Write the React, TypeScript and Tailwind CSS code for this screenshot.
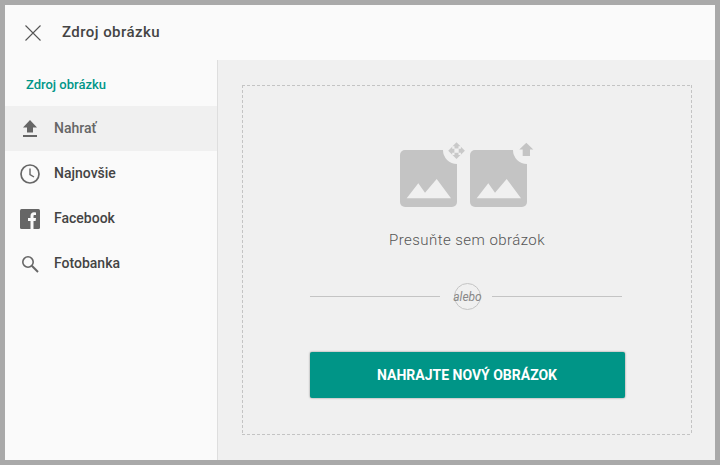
import React from 'react';

function ImageTile({ badge }: { badge: 'move' | 'up' }) {
  return (
    <svg width="57" height="65" viewBox="0 0 57 65" className="block overflow-visible">
      <rect x="0" y="8" width="57" height="57" rx="5" fill="#c4c4c4" />
      <circle cx="57" cy="8" r="14" fill="#f0f0f0" />
      <rect x="43" y="-6" width="28" height="14" fill="#f0f0f0" />
      <path d="M6.700 56.300 L18.300 41.300 L25 50.700 L36.700 37 L51 56.300 Z" fill="#f0f0f0" />
      {badge === 'up' ? (
        <path d="M56.300 0.700 L63.300 7.500 L60 7.500 L60 14 L52.700 14 L52.700 7.500 L49.300 7.500 Z" fill="#c4c4c4" />
      ) : (
        <g fill="#c9c9c9">
          <path d="M56.500 0.300 L60.500 4.300 L58.500 4.300 L58.500 6.500 L54.500 6.500 L54.500 4.300 L52.500 4.300 Z" />
          <path d="M56.500 17 L60.500 13 L58.500 13 L58.500 10.800 L54.500 10.800 L54.500 13 L52.500 13 Z" />
          <path d="M48.200 8.700 L52.200 4.700 L52.200 6.700 L54.400 6.700 L54.400 10.700 L52.200 10.700 L52.200 12.700 Z" />
          <path d="M64.900 8.700 L60.900 4.700 L60.900 6.700 L58.700 6.700 L58.700 10.700 L60.900 10.700 L60.900 12.700 Z" />
        </g>
      )}
    </svg>
  );
}

function NavItem({ label, icon, active }: { label: string; icon: React.ReactNode; active?: boolean }) {
  return (
    <div className={`flex h-[45px] items-center ${active ? 'bg-[#f0f0f0]' : ''}`}>
      <div className="flex w-[49px] justify-center pl-[1px]">{icon}</div>
      <span className={`text-[14px] font-medium ${active ? 'text-[#666]' : 'text-[#444]'}`}>{label}</span>
    </div>
  );
}

export default function App() {
  return (
    <div
      className="h-[465px] w-[720px] overflow-hidden bg-[#a9a9a9] p-[5px]"
      style={{ fontFamily: 'Roboto, sans-serif' }}
    >
      <div className="flex h-[455px] flex-col bg-[#f0f0f0]">
        {/* header */}
        <div className="flex h-[55px] shrink-0 items-center bg-[#fafafa]">
          <div className="flex w-[56px] justify-center">
            <svg width="16" height="16" viewBox="0 0 16 16" stroke="#555" strokeWidth="1.100" fill="none">
              <path d="M0.500 0.500 L15.500 15.500 M15.500 0.500 L0.500 15.500" />
            </svg>
          </div>
          <span className="ml-[1px] text-[15px] font-medium tracking-[0.45px] text-[#444]">Zdroj obrázku</span>
        </div>

        <div className="flex min-h-0 flex-1">
          {/* sidebar */}
          <div className="w-[213px] shrink-0 border-r border-[#dedede] bg-[#fafafa]">
            <div className="flex h-[46px] items-center pt-[3px] pl-[21px] text-[13px] font-medium text-[#009688]">
              Zdroj obrázku
            </div>
            <NavItem
              active
              label="Nahrať"
              icon={
                <svg width="16" height="18" viewBox="0 0 16 18" fill="#666">
                  <path d="M8 0 L15 7.500 L11 7.500 L11 12.500 L5 12.500 L5 7.500 L1 7.500 Z" />
                  <rect x="1" y="15" width="14" height="2" />
                </svg>
              }
            />
            <NavItem
              label="Najnovšie"
              icon={
                <svg width="20" height="20" viewBox="0 0 20 20" fill="none" stroke="#666">
                  <circle cx="10" cy="10" r="9" strokeWidth="1.700" />
                  <path d="M10 4.500 L10 10.500 L14 13" strokeWidth="1.400" />
                </svg>
              }
            />
            <NavItem
              label="Facebook"
              icon={
                <svg width="20" height="20" viewBox="0 0 20 20">
                  <rect width="20" height="20" rx="1.500" fill="#666" />
                  <path
                    d="M10.500 20 L10.500 12 L8 12 L8 9 L10.500 9 L10.500 7 C10.500 4.500 12 3.300 14 3.300 L16 3.400 L16 6 L14.700 6 C13.700 6 13.500 6.500 13.500 7.300 L13.500 9 L16 9 L15.600 12 L13.500 12 L13.500 20 Z"
                    fill="#fafafa"
                  />
                </svg>
              }
            />
            <NavItem
              label="Fotobanka"
              icon={
                <svg width="18" height="18" viewBox="0 0 18 18" fill="none" stroke="#666">
                  <circle cx="7" cy="7" r="5.200" strokeWidth="1.600" />
                  <path d="M10.800 10.800 L17 17" strokeWidth="2" />
                </svg>
              }
            />
          </div>

          {/* drop zone, dashes are 3 on / 2 off so a plain dashed border won't do */}
          <div className="flex-1 pb-[26px] pl-[24px] pr-[23px] pt-[25px]">
            <div className="flex h-[350px] flex-col items-center [background-image:linear-gradient(90deg,#c4c4c4_3px,transparent_3px),linear-gradient(90deg,#c4c4c4_3px,transparent_3px),linear-gradient(#c4c4c4_3px,transparent_3px),linear-gradient(#c4c4c4_3px,transparent_3px)] [background-size:5px_1px,5px_1px,1px_5px,1px_5px] [background-position:0_0,0_100%,0_0,100%_0] [background-repeat:repeat-x,repeat-x,repeat-y,repeat-y] pt-[57px]">
              <div className="flex gap-[13px] pr-[8px]">
                <ImageTile badge="move" />
                <ImageTile badge="up" />
              </div>
              <p className="mt-[23px] text-[15px] font-light leading-[20px] tracking-[0.45px] text-[#555]">
                Presuňte sem obrázok
              </p>
              <div className="mt-[33px] flex items-center pr-[2px]">
                <div className="h-px w-[130px] bg-[#c4c4c4]" />
                <div className="ml-[14px] mr-[11px] flex h-[27px] w-[27px] items-center justify-center rounded-full border border-[#c4c4c4] text-[12px] italic text-[#888]">
                  alebo
                </div>
                <div className="h-px w-[130px] bg-[#c4c4c4]" />
              </div>
              <button className="mt-[42px] flex h-[46px] w-[315px] items-center justify-center rounded-[2px] bg-[#009587] text-[14px] font-bold text-white shadow-[0_0_2px_rgba(0,0,0,0.5)]">
                NAHRAJTE NOVÝ OBRÁZOK
              </button>
            </div>
          </div>
        </div>
      </div>
    </div>
  );
}
